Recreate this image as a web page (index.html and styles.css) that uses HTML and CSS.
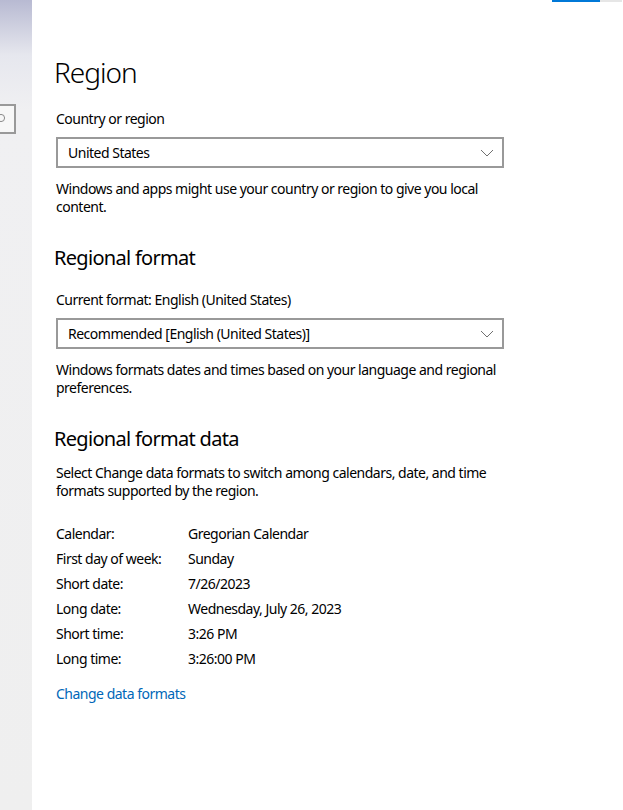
FILE: index.html
```html
<!DOCTYPE html>
<html>
<head>
<meta charset="utf-8">
<link rel="stylesheet" href="styles.css">
</head>
<body>
<div class="window">
  <aside class="nav">
    <div class="search">
      <svg class="search-icon" width="10" height="12" viewBox="0 0 10 12"><circle cx="1" cy="5" r="3.6" fill="none" stroke="#8a8a8a" stroke-width="1"/></svg>
    </div>
  </aside>
  <main class="content">
    <div class="progress"><span class="progress-fill"></span></div>
    <h1 class="title">Region</h1>

    <div class="label">Country or region</div>
    <div class="select">
      <span>United States</span>
      <svg class="chevron" width="14" height="8" viewBox="0 0 14 8"><path d="M1 1 L7 7 L13 1" fill="none" stroke="#707070" stroke-width="1"/></svg>
    </div>
    <p class="desc">Windows and apps might use your country or region to give you local content.</p>

    <h2 class="subtitle">Regional format</h2>
    <div class="label label-sub">Current format: English (United States)</div>
    <div class="select">
      <span>Recommended [English (United States)]</span>
      <svg class="chevron" width="14" height="8" viewBox="0 0 14 8"><path d="M1 1 L7 7 L13 1" fill="none" stroke="#707070" stroke-width="1"/></svg>
    </div>
    <p class="desc">Windows formats dates and times based on your language and regional preferences.</p>

    <h2 class="subtitle">Regional format data</h2>
    <p class="desc desc-sub">Select Change data formats to switch among calendars, date, and time formats supported by the region.</p>

    <dl class="data">
      <dt>Calendar:</dt><dd>Gregorian Calendar</dd>
      <dt>First day of week:</dt><dd>Sunday</dd>
      <dt>Short date:</dt><dd>7/26/2023</dd>
      <dt>Long date:</dt><dd>Wednesday, July 26, 2023</dd>
      <dt>Short time:</dt><dd>3:26 PM</dd>
      <dt>Long time:</dt><dd>3:26:00 PM</dd>
    </dl>

    <a class="link" href="#">Change data formats</a>
  </main>
</div>
</body>
</html>
```

FILE: styles.css
```css
html, body {
  margin: 0;
  padding: 0;
  height: 100%;
  background: #ffffff;
}

body {
  font-family: "Noto Sans", "Open Sans", Arial, sans-serif;
  font-size: 14px;
  letter-spacing: -0.5px;
  color: #000000;
}

.window {
  display: flex;
  min-height: 810px;
}

.nav {
  width: 32px;
  flex: 0 0 32px;
  background: linear-gradient(to bottom, #b8bad2 0px, #e6e7ee 55px, #f0f0f2 110px, #efefef 810px);
  padding-top: 104px;
  box-sizing: border-box;
}

.search {
  width: 16px;
  height: 30px;
  box-sizing: border-box;
  border: 2px solid #999999;
  border-left: none;
  background: #f7f7f7;
  display: flex;
  align-items: center;
  overflow: hidden;
}

.search-icon {
  display: block;
}

.content {
  position: relative;
  flex: 1;
  padding: 52px 0 0 24px;
}

.progress {
  position: absolute;
  top: 0;
  left: 520px;
  width: 70px;
  height: 2px;
  background: #e6e6e6;
}

.progress-fill {
  display: block;
  width: 48px;
  height: 2px;
  background: #0078d7;
}

.title {
  margin: 0 0 0 -2px;
  font-size: 28px;
  font-weight: 300;
  letter-spacing: -1px;
  line-height: 40px;
}

.label {
  margin-top: 17px;
  line-height: 20px;
}

.label-sub {
  margin-top: 18px;
}

.select {
  margin-top: 8px;
  width: 448px;
  height: 31px;
  box-sizing: border-box;
  border: 2px solid #999999;
  padding: 0 8px 0 10px;
  display: flex;
  align-items: center;
  justify-content: space-between;
}

.chevron {
  display: block;
}

.desc {
  margin: 12px 0 0;
  width: 450px;
  line-height: 18px;
}

.desc-sub {
  margin-top: 11px;
}

.subtitle {
  margin: 28px 0 0 -2px;
  font-size: 20px;
  font-weight: 400;
  letter-spacing: -0.7px;
  line-height: 28px;
}

.data {
  margin: 24px 0 0;
  display: grid;
  grid-template-columns: 132px auto;
  row-gap: 5px;
  line-height: 20px;
}

.data dt, .data dd {
  margin: 0;
}

.link {
  display: inline-block;
  margin-top: 15px;
  color: #0067b8;
  text-decoration: none;
  line-height: 20px;
}
```
